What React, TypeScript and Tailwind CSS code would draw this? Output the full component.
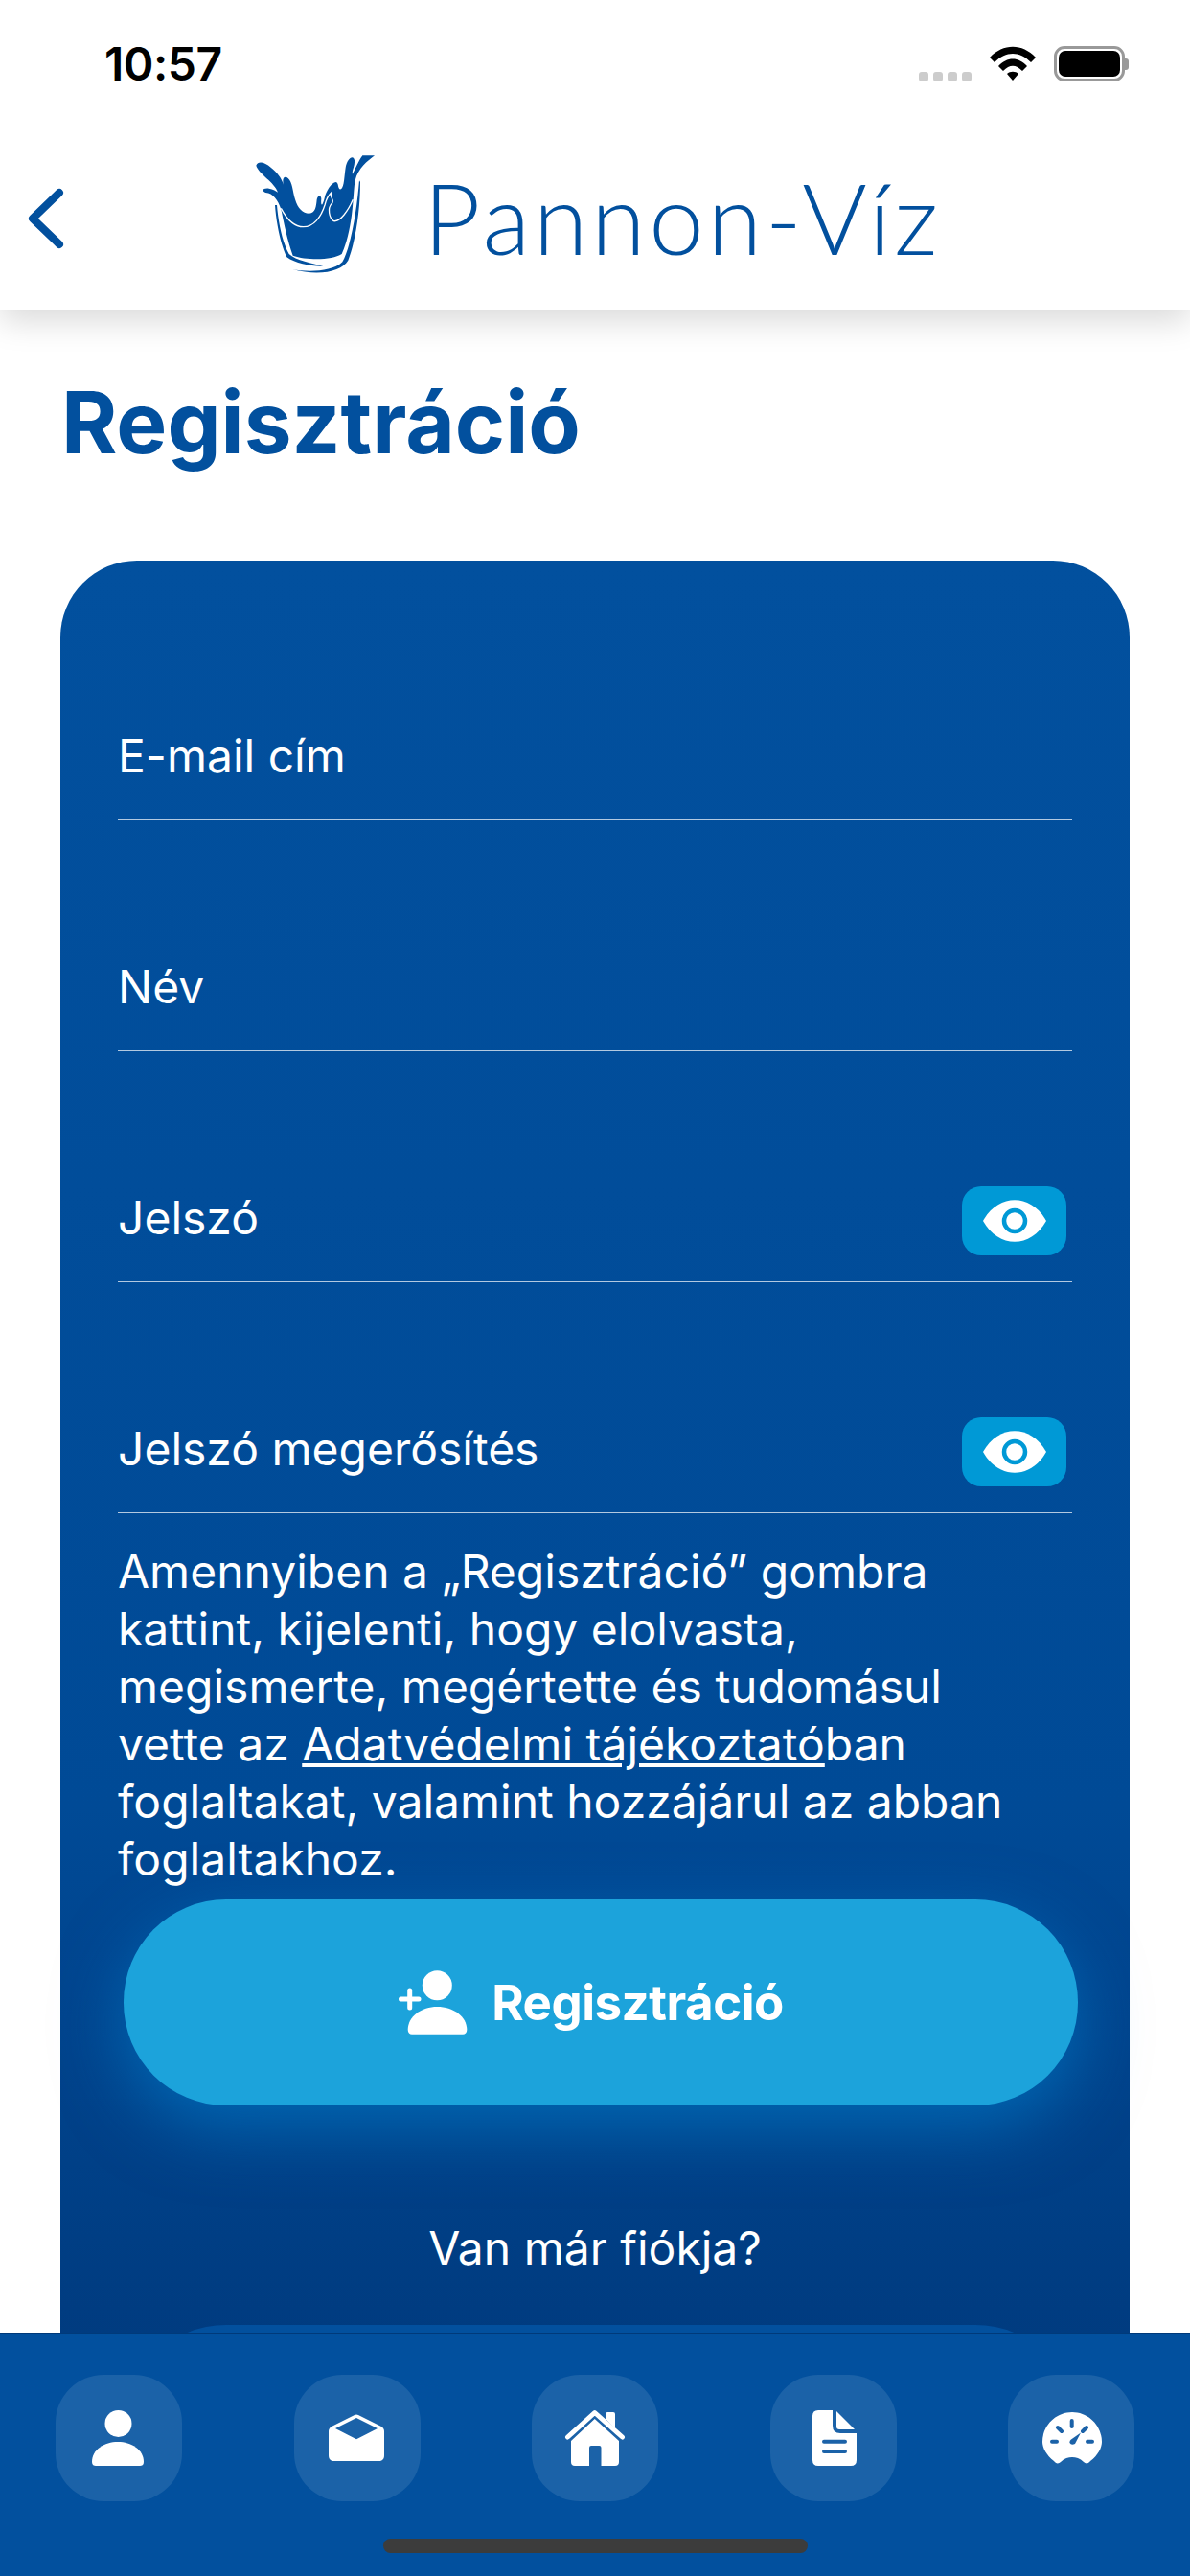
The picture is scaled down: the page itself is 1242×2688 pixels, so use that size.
const FIELDS = [
  { label: "E-mail cím", secret: false },
  { label: "Név", secret: false },
  { label: "Jelszó", secret: true },
  { label: "Jelszó megerősítés", secret: true },
];

function StatusBar() {
  return (
    <div className="flex h-[110px] items-start justify-between pl-[109px] pr-[64px] pt-[36px]">
      <span className="font-['Inter',sans-serif] text-[48px] font-semibold leading-[62px] tracking-[-0.5px] text-black">
        10:57
      </span>
      <div className="flex items-start pt-[12px]">
        <div className="mt-[27px] flex gap-[5px]">
          <span className="h-[10px] w-[10px] rounded-[3px] bg-[#cccccc]" />
          <span className="h-[10px] w-[10px] rounded-[3px] bg-[#cccccc]" />
          <span className="h-[10px] w-[10px] rounded-[3px] bg-[#cccccc]" />
          <span className="h-[10px] w-[10px] rounded-[3px] bg-[#cccccc]" />
        </div>
        <svg className="ml-[19px]" width="48" height="36" viewBox="0 0 48 36">
          <path d="M0 12 C14 -3 34 -3 48 12 L43 17 C31 5 17 5 5 17 Z" fill="#000" />
          <path d="M9 21 C18 11 30 11 39 21 L34 26 C27 19 21 19 14 26 Z" fill="#000" />
          <path d="M18 29 C21 26 27 26 30 29 L24 36 Z" fill="#000" />
        </svg>
        <div className="ml-[19px] flex items-center">
          <div className="flex h-[37px] w-[74px] rounded-[11px] border-[3px] border-[#999999] p-[2px]">
            <div className="flex-1 rounded-[7px] bg-black" />
          </div>
          <span className="h-[12px] w-[4px] rounded-r-[3px] bg-[#999999]" />
        </div>
      </div>
    </div>
  );
}

function Logo() {
  return (
    <svg width="200" height="160" viewBox="0 0 600 480">
      <path
        d="M82 98 C88 82 110 88 128 104 C148 120 160 135 168 158 C162 140 170 128 182 138 C196 150 196 178 204 204 C212 232 228 248 248 248 C268 248 270 225 272 205 C274 190 286 190 286 203 C284 222 288 232 296 200 C300 180 318 150 332 150 C342 152 336 175 348 172 C358 165 358 130 362 105 C366 78 386 62 390 82 C392 100 380 115 384 125 C392 110 402 85 415 67 L453 67 C430 85 402 105 392 145 C388 165 388 190 385 215 C380 280 368 335 350 375 C320 395 240 395 197 380 C182 340 170 285 160 235 C150 205 135 185 112 183 C98 178 102 168 122 170 C135 172 145 178 150 182 C140 150 90 125 82 98 Z"
        fill="#02509e"
      />
      <path
        d="M160 232 C180 270 205 290 230 290 C262 290 285 260 297 222 C301 205 306 192 320 180 C305 195 332 205 318 218 C305 232 310 262 325 272 C345 275 370 240 385 205"
        fill="none"
        stroke="#fff"
        strokeWidth="4"
      />
      <path
        d="M141 222 L147 222 C152 280 165 340 185 375 C205 395 260 405 292 413 C260 415 205 405 178 385 C160 350 145 280 141 222 Z"
        fill="#02509e"
      />
      <path
        d="M405 145 L408 150 C408 230 395 330 370 395 C350 430 280 445 195 423 C240 432 320 432 352 400 C380 350 398 230 405 145 Z"
        fill="#02509e"
      />
    </svg>
  );
}

function Header() {
  return (
    <header className="relative z-10 h-[323px] bg-white shadow-[0_12px_32px_rgba(0,0,0,0.15)]">
      <StatusBar />
      <div className="flex h-[190px] items-center pt-[30px]">
        <svg className="ml-[26px] mt-[16px]" width="44" height="66" viewBox="0 0 44 66">
          <path d="M36 6 L8 33 L36 60" fill="none" stroke="#02509e" strokeWidth="8" strokeLinecap="round" strokeLinejoin="round" />
        </svg>
        <div className="ml-[170px] flex items-center">
          <Logo />
          <span className="ml-[2px] mt-[13px] font-['Lato',sans-serif] text-[103px] font-light leading-none tracking-[3.6px] text-[#02509e]">
            Pannon-Víz
          </span>
        </div>
      </div>
    </header>
  );
}

function EyeButton() {
  return (
    <div className="mr-[6px] flex h-[72px] w-[109px] items-center justify-center rounded-[20px] bg-[#0099d6]">
      <svg width="66" height="44" viewBox="0 0 66 44">
        <path d="M0 22 C16 -7 50 -7 66 22 C50 51 16 51 0 22 Z" fill="#fff" />
        <circle cx="33" cy="22" r="11" fill="#fff" stroke="#0099d6" strokeWidth="4.5" />
      </svg>
    </div>
  );
}

function Field({ label, secret }: { label: string; secret: boolean }) {
  return (
    <div className="flex h-[241px] items-end border-b border-white/70 pb-[27px]">
      <div className="flex h-[72px] flex-1 items-center justify-between">
        <span className="-mt-[6px] text-[48px] leading-[60px] text-white">{label}</span>
        {secret && <EyeButton />}
      </div>
    </div>
  );
}

function RegisterIcon() {
  return (
    <svg width="72" height="67" viewBox="0 0 72 67">
      <circle cx="40.3" cy="15.7" r="15.5" fill="#fff" />
      <path d="M9.7 62 C9.7 48 24 38 40.3 38 C57 38 71.3 48 71.3 62 C71.3 65 69.5 66.7 67 66.7 L14 66.7 C11.5 66.7 9.7 65 9.7 62 Z" fill="#fff" />
      <path d="M2.5 30 L21 30 M11.7 21 L11.7 39" stroke="#fff" strokeWidth="5" strokeLinecap="round" />
    </svg>
  );
}

function Card() {
  return (
    <section className="mx-[63px] mt-[89px] h-[2000px] rounded-[80px] bg-gradient-to-b from-[#02509e] from-[0%] via-[#004a96] via-[65%] to-[#003a7e] to-[95%] px-[60px] pt-[30px]">
      {FIELDS.map((field) => (
        <Field key={field.label} label={field.label} secret={field.secret} />
      ))}
      <p className="mt-[31px] text-[48px] leading-[60px] text-white">
        Amennyiben a „Regisztráció” gombra
        <br />
        kattint, kijelenti, hogy elolvasta,
        <br />
        megismerte, megértette és tudomásul
        <br />
        vette az <span className="underline">Adatvédelmi tájékoztató</span>ban
        <br />
        foglaltakat, valamint hozzájárul az abban
        <br />
        foglaltakhoz.
      </p>
      <button className="ml-[6px] mt-[12px] flex h-[215px] w-[996px] items-center justify-center gap-[25px] rounded-[107px] bg-[#1ca3db] pr-[20px] shadow-[0_24px_70px_rgba(0,140,220,0.5)]">
        <RegisterIcon />
        <span className="text-[51px] font-bold leading-none tracking-[-0.5px] text-white">Regisztráció</span>
      </button>
      <p className="mt-[119px] text-center text-[48px] leading-[60px] text-white">Van már fiókja?</p>
      <div className="ml-[6px] mt-[50px] h-[214px] w-[996px] rounded-[107px] bg-[#02509e]" />
    </section>
  );
}

function TabIcon({ children }: { children: React.ReactNode }) {
  return (
    <div className="h-[132px] w-[132px] rounded-[50px] bg-[#1b62a8]">
      <svg width="132" height="132" viewBox="0 0 132 132">
        {children}
      </svg>
    </div>
  );
}

function TabBar() {
  return (
    <nav className="absolute bottom-0 left-0 right-0 z-20 h-[254px] border-t border-[#003a7a] bg-[#02509e]">
      <div className="flex justify-between px-[58px] pt-[43px]">
        <TabIcon>
          <circle cx="65.5" cy="51" r="14" fill="#fff" />
          <path d="M38 91 C38 78 51 70 65 70 C79 70 92 78 92 91 C92 94 90 95 88 95 L42 95 C40 95 38 94 38 91 Z" fill="#fff" />
        </TabIcon>
        <TabIcon>
          <path
            fillRule="evenodd"
            d="M63 42 Q65 41 67 42 L91 54 C93 55 94 57 94 59 L94 84 C94 88 92 90 88 90 L42 90 C38 90 36 88 36 84 L36 59 C36 57 37 55 39 54 Z M65 45 L43 56 L65 67.3 L87 56 Z"
            fill="#fff"
          />
        </TabIcon>
        <TabIcon>
          <path d="M37.5 65 L65.7 39.5 L94.5 65" fill="none" stroke="#fff" strokeWidth="5" strokeLinecap="round" strokeLinejoin="round" />
          <path d="M77 46 L77 41 Q77 39 79 39 L85 39 Q87 39 87 41 L87 56 Z" fill="#fff" />
          <path d="M65.7 46 L91 69 L91 91 Q91 95 87 95 L72.5 95 L72.5 76 Q72.5 74 70.5 74 L62 74 Q60 74 60 76 L60 95 L45 95 Q41 95 41 91 L41 69 Z" fill="#fff" />
        </TabIcon>
        <TabIcon>
          <path d="M50 37 L65 37 L65 53 Q65 61 73 61 L90 61 L90 89 Q90 95 84 95 L50 95 Q44 95 44 89 L44 43 Q44 37 50 37 Z" fill="#fff" />
          <path d="M69 38 L88 57 L72 57 Q69 57 69 54 Z" fill="#fff" />
          <path d="M56 69.7 L78 69.7 M56 80 L78 80" stroke="#1b62a8" strokeWidth="4" strokeLinecap="round" />
        </TabIcon>
        <TabIcon>
          <path d="M48 90 C40 84 36 76 36 70 C36 53 50 39 67 39 C84 39 98 53 98 70 C98 76 94 84 86 90 C84 93 81 93 79 91 C75 87 71 86 67 86 C63 86 59 87 55 91 C53 93 50 93 48 90 Z" fill="#fff" />
          <path d="M66.7 48 L66.7 54 M52 55 L56 59 M82 55 L78 59 M46 69.7 L51 69.7 M83 69.7 L88 69.7" stroke="#1b62a8" strokeWidth="4" strokeLinecap="round" />
          <path d="M76 60.5 L70 72 Q66 74 64.5 71 Q64 69 66 67.5 Z" fill="#1b62a8" />
        </TabIcon>
      </div>
      <div className="mx-auto mt-[39px] h-[15px] w-[443px] rounded-full bg-[#3c3c3c]" />
    </nav>
  );
}

export default function App() {
  return (
    <div className="relative h-[2688px] w-[1242px] overflow-hidden bg-white font-['Inter',sans-serif]">
      <Header />
      <h1 className="ml-[64px] mt-[63px] text-[89px] font-bold leading-[110px] text-[#02509e]">Regisztráció</h1>
      <Card />
      <TabBar />
    </div>
  );
}
